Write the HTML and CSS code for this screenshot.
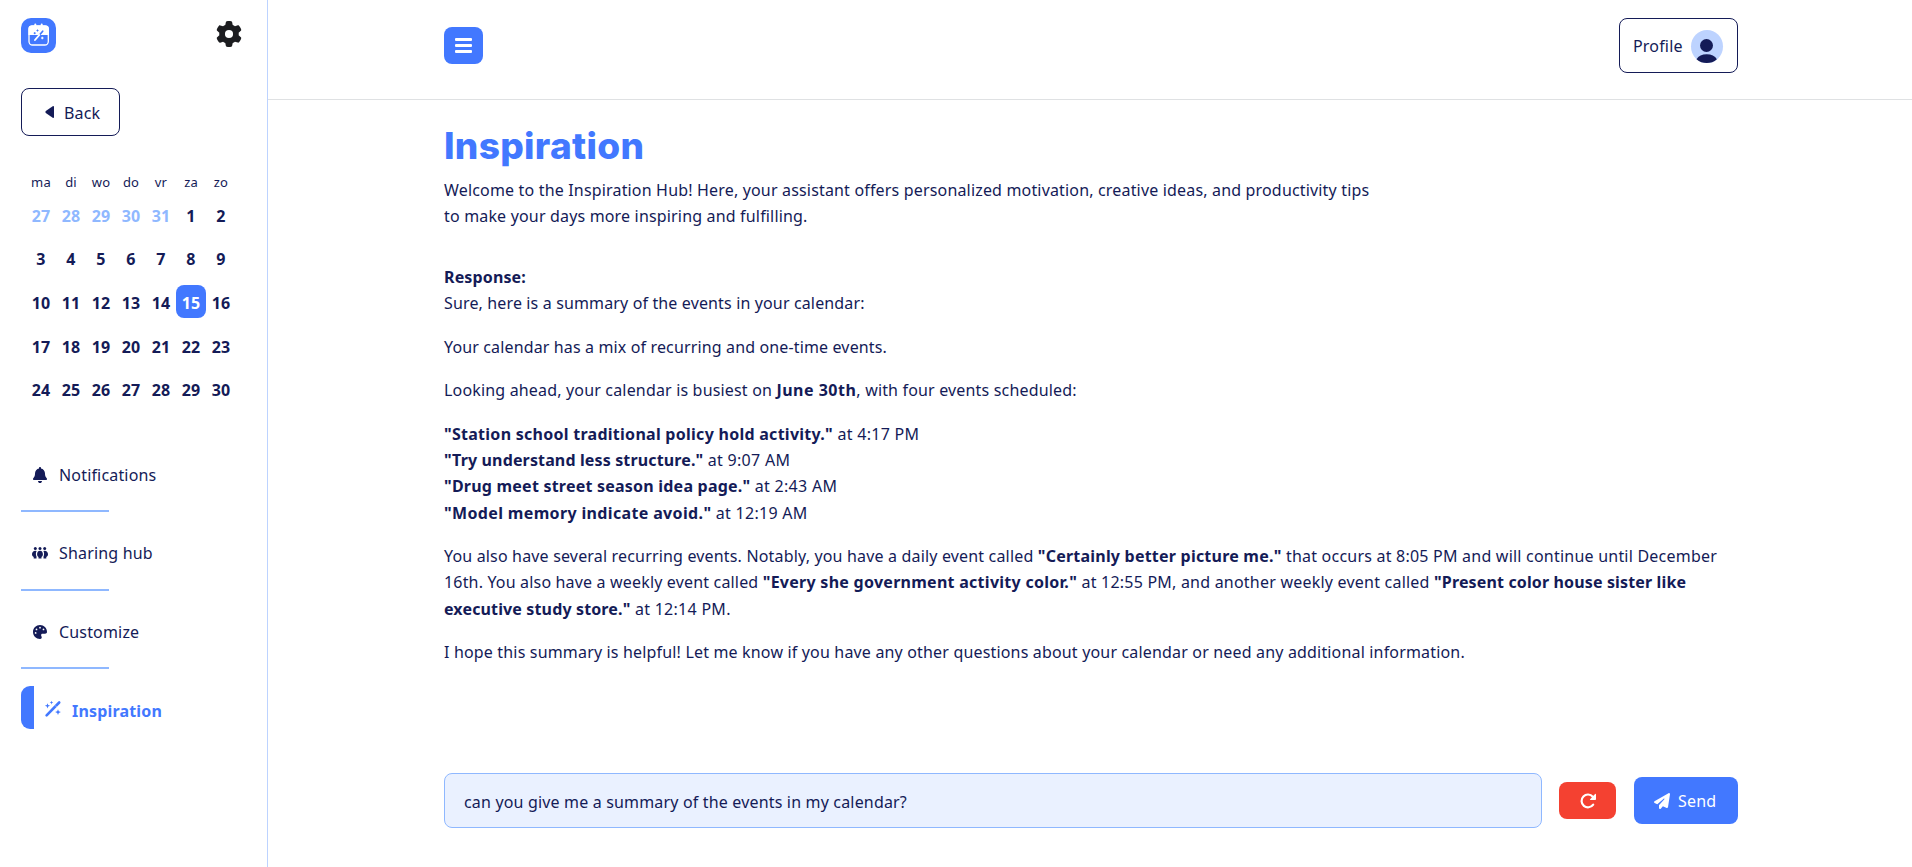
FILE: index.html
```html
<!DOCTYPE html>
<html lang="en">
<head>
<meta charset="utf-8">
<title>Inspiration</title>
<link rel="stylesheet" href="styles.css">
</head>
<body>
<div class="app">
  <aside class="sidebar">
    <div class="brand">
      <svg class="logo" viewBox="0 0 35 35"><rect width="35" height="35" rx="10" fill="#4278ff"/><rect x="8" y="8" width="19.300" height="19" rx="3.500" fill="none" stroke="#fff" stroke-width="1.300"/><path d="M7.400 17v-6.500a3 3 0 0 1 3-3h14.500a3 3 0 0 1 3 3V17z" fill="#fff"/><path d="M14.300 8V6.600M20.700 8V6.600" stroke="#fff" stroke-width="2" stroke-linecap="round"/><path d="M18.500 17l3.200-3.800" stroke="#4278ff" stroke-width="1.700" stroke-linecap="round"/><path d="M14 22l4.300-5" stroke="#fff" stroke-width="1.900" stroke-linecap="round"/><path d="M16.500 11.500v2M15.500 12.500h2M13.700 14.200v2M12.700 15.200h2" stroke="#4278ff"/><path d="M21.300 18.700v2.600M20 20h2.600" stroke="#fff" stroke-width="1.100"/></svg>
      <svg class="gear" viewBox="0 0 512 512"><path fill="#1c1d20" d="M495.900 166.600c3.200 8.700.5 18.400-6.400 24.600l-43.300 39.400c1.100 8.300 1.700 16.800 1.700 25.400s-.6 17.100-1.700 25.400l43.300 39.400c6.900 6.200 9.600 15.900 6.400 24.600-4.400 11.900-9.700 23.300-15.800 34.300l-4.700 8.100c-6.600 11-14 21.400-22.100 31.200-5.900 7.200-15.700 9.600-24.500 6.800l-55.700-17.700c-13.400 10.300-28.200 18.900-44 25.400l-12.500 57.100c-2 9.100-9 16.300-18.200 17.800-13.800 2.300-28 3.500-42.500 3.500s-28.700-1.200-42.500-3.500c-9.200-1.500-16.200-8.700-18.200-17.800l-12.500-57.100c-15.800-6.500-30.600-15.100-44-25.400L83.100 425.900c-8.800 2.800-18.600.3-24.500-6.800-8.100-9.800-15.500-20.200-22.100-31.200l-4.700-8.100c-6.100-11-11.400-22.400-15.800-34.300-3.200-8.700-.5-18.400 6.400-24.600l43.300-39.400C64.600 273.100 64 264.600 64 256s.6-17.100 1.700-25.400L22.400 191.200c-6.900-6.200-9.600-15.900-6.400-24.600 4.400-11.900 9.700-23.300 15.800-34.300l4.700-8.100c6.600-11 14-21.400 22.100-31.200 5.900-7.200 15.700-9.600 24.500-6.800l55.700 17.700c13.400-10.300 28.200-18.900 44-25.400l12.500-57.100c2-9.100 9-16.300 18.200-17.800C227.300 1.200 241.500 0 256 0s28.700 1.200 42.500 3.500c9.200 1.500 16.200 8.700 18.200 17.800l12.500 57.100c15.800 6.500 30.600 15.100 44 25.400l55.700-17.700c8.800-2.800 18.600-.3 24.500 6.800 8.100 9.800 15.500 20.200 22.100 31.200l4.700 8.100c6.100 11 11.400 22.400 15.700 34.400zM256 336a80 80 0 1 0 0-160 80 80 0 1 0 0 160z"/></svg>
    </div>
    <button class="back"><svg class="caret" viewBox="0 0 9 12"><path d="M7.700.3.800 5.100q-1 .9 0 1.800l6.900 4.800q1.300.6 1.300-.8V1.100q0-1.400-1.300-.8z" fill="#141b57"/></svg><span>Back</span></button>
    <div class="calendar">
      <div class="week names"><span>ma</span><span>di</span><span>wo</span><span>do</span><span>vr</span><span>za</span><span>zo</span></div>
      <div class="week"><b class="out">27</b><b class="out">28</b><b class="out">29</b><b class="out">30</b><b class="out">31</b><b>1</b><b>2</b></div>
      <div class="week"><b>3</b><b>4</b><b>5</b><b>6</b><b>7</b><b>8</b><b>9</b></div>
      <div class="week"><b>10</b><b>11</b><b>12</b><b>13</b><b>14</b><b class="today">15</b><b>16</b></div>
      <div class="week"><b>17</b><b>18</b><b>19</b><b>20</b><b>21</b><b>22</b><b>23</b></div>
      <div class="week"><b>24</b><b>25</b><b>26</b><b>27</b><b>28</b><b>29</b><b>30</b></div>
    </div>
    <nav class="menu">
      <a class="item"><svg viewBox="0 0 448 512"><path fill="currentColor" d="M224 0c-17.700 0-32 14.300-32 32v19.200C119 66 64 130.600 64 208v18.800c0 47-17.300 92.400-48.500 127.600l-7.400 8.300c-8.400 9.400-10.400 22.900-5.300 34.400S19.400 416 32 416h384c12.600 0 24-7.400 29.200-18.900s3.100-25-5.300-34.400l-7.400-8.300C401.300 319.200 384 273.900 384 226.800V208c0-77.400-55-142-128-156.800V32c0-17.700-14.300-32-32-32zm45.300 493.300c12-12 18.700-28.300 18.700-45.300H160c0 17 6.700 33.300 18.700 45.300S207 512 224 512s33.300-6.700 45.300-18.700z"/></svg><span>Notifications</span></a>
      <a class="item"><svg viewBox="0 0 16 16"><g fill="currentColor"><circle cx="3.300" cy="3.400" r="1.500"/><circle cx="8" cy="3.400" r="1.500"/><circle cx="12.700" cy="3.400" r="1.500"/><path d="M3.500 5.700C1 5.700 0 7.600 0 9.200c0 1.500.8 2.300 1.700 2.700v1.600h2.800v-2C3.700 10 3.700 7.700 4.600 6zM12.500 5.700c2.500 0 3.500 1.900 3.500 3.500 0 1.500-.8 2.300-1.700 2.700v1.600h-2.800v-2c.8-1.500.8-3.800-.1-5.500zM8 5.700c-2 0-2.900 1.800-2.900 3.500 0 1.300.6 2.200 1.400 2.700v1.600h3v-1.600c.8-.5 1.400-1.400 1.400-2.700 0-1.700-.9-3.500-2.900-3.500z"/></g></svg><span>Sharing hub</span></a>
      <a class="item"><svg class="small" viewBox="0 0 512 512"><path fill="currentColor" d="M512 256v2.700c-.4 36.500-33.600 61.300-70.100 61.300H344c-26.500 0-48 21.500-48 48 0 3.400.4 6.700 1 9.900 2.100 10.200 6.500 20 10.800 29.900 6.100 13.800 12.100 27.500 12.100 42 0 31.800-21.600 60.700-53.400 62-3.500.1-7 .2-10.600.2C114.600 512 0 397.400 0 256S114.600 0 256 0s256 114.600 256 256zM128 288a32 32 0 1 0-64 0 32 32 0 1 0 64 0zm0-96a32 32 0 1 0 0-64 32 32 0 1 0 0 64zm160-96a32 32 0 1 0-64 0 32 32 0 1 0 64 0zm96 96a32 32 0 1 0 0-64 32 32 0 1 0 0 64z"/></svg><span>Customize</span></a>
      <a class="item active"><svg viewBox="0 0 16 16"><path d="M1.600 14.400 14.200 1.500" stroke="currentColor" stroke-width="2.600" stroke-linecap="round"/><path d="m10.300 4.600 1 1" stroke="#fff" stroke-width=".7"/><path fill="currentColor" d="m2.500 2.200.7 1.900 1.900.7-1.900.7-.7 1.900-.7-1.900L-.1 4.800l1.900-.7zM6.500-.2l.5 1.300 1.300.5-1.300.5-.5 1.300L6 2.100l-1.300-.5L6 1.100zM13 8.200l.8 2.100 2.100.8-2.100.8-.8 2.100-.8-2.100-2.100-.8 2.100-.8z"/></svg><span>Inspiration</span></a>
    </nav>
  </aside>
  <main class="main">
    <header class="topbar">
      <button class="burger"><i></i><i></i><i></i></button>
      <button class="profile"><span>Profile</span><svg viewBox="0 0 32 33"><ellipse cx="16" cy="16.500" rx="16" ry="16.500" fill="#bdd3ff"/><circle cx="15.500" cy="15.500" r="6.500" fill="#141b57"/><path d="M5.500 29.200C7.500 25.700 11 24.300 15.700 24.300s8.200 1.400 10.200 4.900C23 32 19.500 33 15.700 33S8.500 32 5.500 29.200z" fill="#141b57"/></svg></button>
    </header>
    <section class="content">
      <h1>Inspiration</h1>
      <p class="intro">Welcome to the Inspiration Hub! Here, your assistant offers personalized motivation, creative ideas, and productivity tips<br>to make your days more inspiring and fulfilling.</p>
      <div class="response">
        <p><b class="tight">Response:</b><br><span class="tight">Sure, here is a summary of the events in your calendar:</span></p>
        <p><span class="tight">Your calendar has a mix of recurring and one-time events.</span></p>
        <p>Looking ahead, your calendar is busiest on <b class="widest">June 30th</b>, with four events scheduled:</p>
        <p><b>"Station school traditional policy hold activity."</b><span class="wide"> at 4:17 PM</span><br><b class="tight">"Try understand less structure."</b><span class="wide"> at 9:07 AM</span><br><b class="mid">"Drug meet street season idea page."</b><span class="wide"> at 2:43 AM</span><br><b class="wider">"Model memory indicate avoid."</b><span class="wide"> at 12:19 AM</span></p>
        <p>You also have several recurring events. Notably, you have a daily event called <b class="mid">"Certainly better picture me."</b><span class="mid"> that occurs at 8:05 PM and will continue until December</span><br>16th. You also have a weekly event called <b>"Every she government activity color."</b><span class="mid"> at 12:55 PM, and another weekly event called </span><b class="tight">"Present color house sister like<br>executive study store."</b><span class="wide"> at 12:14 PM.</span></p>
        <p>I hope this summary is helpful! Let me know if you have any other questions about your calendar or need any additional information.</p>
      </div>
      <form class="prompt">
        <div class="field">can you give me a summary of the events in my calendar?</div>
        <button type="button" class="reset"><svg viewBox="0 0 16 16"><path d="M13.200 11.600A6.400 6.400 0 1 1 12.800 3.700" fill="none" stroke="#fff" stroke-width="2.200" stroke-linecap="round"/><path d="M15.100.9q.9-.4.900.6v4.700q0 .8-.8.800h-4.700q-1 0-.4-.8z" fill="#fff"/></svg></button>
        <button type="button" class="send"><svg viewBox="0 0 512 512"><path fill="#fff" d="M498.100 5.600c10.100 7 15.400 19.100 13.500 31.200l-64 416c-1.500 9.700-7.400 18.200-16 23s-18.900 5.400-28 1.600L284 427.700l-68.500 74.100c-8.900 9.700-22.900 12.900-35.200 8.100S160 493.200 160 480v-83.600c0-4 1.500-7.800 4.200-10.800l167.600-182.800c5.800-6.300 5.600-16-.4-22s-15.700-6.400-22-.7L106 360.800 17.700 316.600C7.100 311.300.3 300.700 0 288.900s5.900-22.800 16.100-28.700l448-256c10.700-6.100 23.900-5.500 34 1.400z"/></svg><span>Send</span></button>
      </form>
    </section>
  </main>
</div>
</body>
</html>
```
FILE: styles.css
```css
* { box-sizing: border-box; }
body {
  margin: 0;
  font-family: "Noto Sans", "Open Sans", sans-serif;
  font-size: 16px;
  line-height: 26.2px;
  letter-spacing: .17px;
  color: #141b57;
  background: #fff;
}
button { font: inherit; letter-spacing: inherit; color: inherit; background: none; border: 0; padding: 0; }
svg { display: block; flex: none; overflow: visible; }
h1, p { margin: 0; }
.app { display: flex; height: 867px; overflow: hidden; }

.sidebar { width: 268px; flex: none; padding: 18px 0 0 21px; border-right: 1px solid #bdd3ff; }
.brand { display: flex; justify-content: space-between; height: 70px; padding-right: 25px; }
.logo { width: 35px; height: 35px; }
.gear { width: 26px; height: 26px; margin-top: 3px; }
.back { display: flex; align-items: center; gap: 10px; width: 99px; height: 48px; padding: 2px 0 0 23px; border: 1px solid #141b57; border-radius: 8px; }
.caret { width: 9px; height: 12px; margin-top: -3px; }

.calendar { width: 210px; margin: 35px 0 0 5px; }
.week { display: grid; grid-template-columns: repeat(7, 30px); height: 43.6px; }
.week b, .week span { display: flex; align-items: center; justify-content: center; height: 33px; }
.week b { padding-top: 3px; }
.names { height: 27px; font-size: 13px; }
.week.names { height: 27px; }
.week.names span { height: 22px; }
.out { color: #8fb8ff; }
.today { color: #fff; background: #4278ff; border-radius: 8px; }

.menu { margin-top: 17.3px; }
.item { display: flex; align-items: center; gap: 11px; position: relative; height: 78.7px; padding: 4px 0 0 11px; }
.item svg { width: 16px; height: 16px; }
.item svg.small { width: 14px; height: 14px; margin: 0 1px; }
.item:not(.active)::after { content: ""; position: absolute; left: 0; bottom: 0; width: 88px; height: 2px; background: #8fb8ff; }
.active { height: 43px; margin-top: 16.6px; padding: 4px 0 0 11px; border-left: 13px solid #4278ff; border-radius: 9px 0 0 9px; color: #4278ff; font-weight: 700; }
.active span { padding-top: 3px; }

.main { flex: 1; }
.topbar { display: flex; justify-content: space-between; height: 100px; padding: 18px 174px 0 176px; border-bottom: 1px solid #dfe1e3; }
.burger { display: flex; flex-direction: column; align-items: center; justify-content: center; gap: 3px; width: 39px; height: 37px; margin-top: 9px; border-radius: 8px; background: #4278ff; }
.burger i { width: 17px; height: 3px; border-radius: 1px; background: #fff; }
.profile { display: flex; align-items: center; justify-content: space-between; width: 119px; height: 55px; padding: 1px 14px 0 13px; border: 1px solid #141b57; border-radius: 8px; }
.profile svg { width: 32px; height: 33px; }

.content { width: 1294px; margin-left: 176px; padding-top: 24px; white-space: nowrap; }
h1 { font: 800 37px/44px Inter, sans-serif; letter-spacing: .3px; color: #4278ff; }
.intro { margin-top: 9px; }
.response { height: 544px; padding-top: 34.5px; }
.response p { margin-bottom: 17.4px; }
.response b { letter-spacing: .27px; }
.response .tight { letter-spacing: .14px; }
.response .mid { letter-spacing: .22px; }
.response .wide { letter-spacing: .28px; }
.response .wider { letter-spacing: .35px; }
.response .widest { letter-spacing: .5px; }
.prompt { display: flex; align-items: center; }
.field { width: 1098px; height: 55px; padding: 15px 19px; border: 1px solid #8fb8ff; border-radius: 8px; background: #eaf1ff; }
.reset { display: flex; align-items: center; justify-content: center; width: 57px; height: 37px; margin: 0 18px 0 17px; border-radius: 8px; background: #f44131; }
.reset svg { width: 16px; height: 16px; }
.send { display: flex; align-items: center; gap: 8px; width: 104px; height: 47px; padding-left: 20px; border-radius: 8px; background: #4278ff; color: #fff; }
.send svg { width: 16px; height: 16px; }
```
